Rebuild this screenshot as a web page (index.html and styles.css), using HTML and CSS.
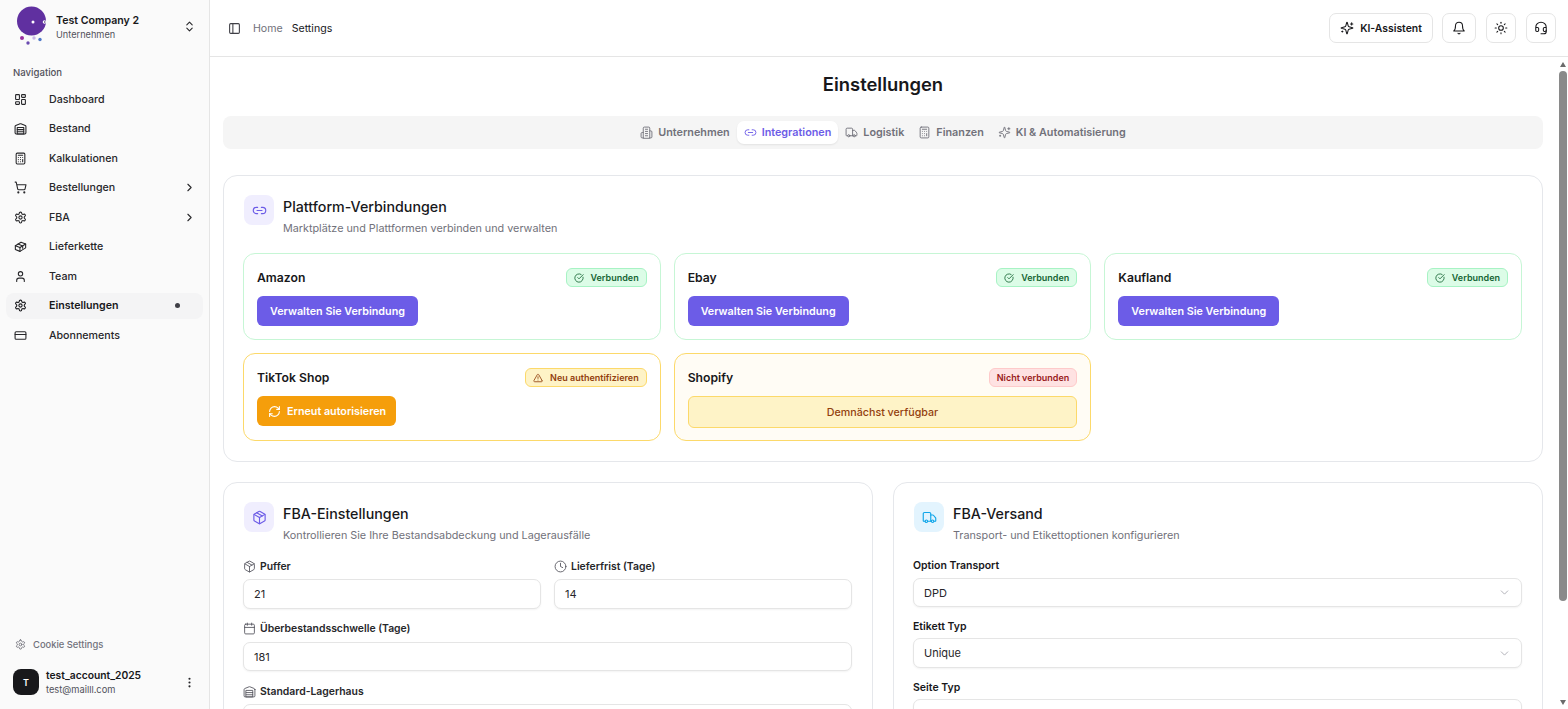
FILE: index.html
```html
<!DOCTYPE html>
<html lang="de">
<head>
  <meta charset="UTF-8">
  <meta name="viewport" content="width=device-width, initial-scale=1.0">
  <title>Einstellungen</title>
  <link rel="stylesheet" href="styles.css">
</head>
<body>
  <!-- Icon set -->
  <svg class="sprite" xmlns="http://www.w3.org/2000/svg">
    <symbol id="i-dashboard" viewBox="0 0 24 24"><rect x="3" y="3" width="7" height="9" rx="1"/><rect x="14" y="3" width="7" height="5" rx="1"/><rect x="14" y="12" width="7" height="9" rx="1"/><rect x="3" y="16" width="7" height="5" rx="1"/></symbol>
    <symbol id="i-warehouse" viewBox="0 0 24 24"><path d="M22 8.35V20a2 2 0 0 1-2 2H4a2 2 0 0 1-2-2V8.35A2 2 0 0 1 3.26 6.5l8-3.2a2 2 0 0 1 1.48 0l8 3.2A2 2 0 0 1 22 8.35Z"/><path d="M6 18h12"/><path d="M6 14h12"/><rect x="6" y="10" width="12" height="12"/></symbol>
    <symbol id="i-building" viewBox="0 0 24 24"><path d="M6 22V4a2 2 0 0 1 2-2h8a2 2 0 0 1 2 2v18Z"/><path d="M6 12H4a2 2 0 0 0-2 2v6a2 2 0 0 0 2 2h2"/><path d="M18 9h2a2 2 0 0 1 2 2v9a2 2 0 0 1-2 2h-2"/><path d="M10 6h4"/><path d="M10 10h4"/><path d="M10 14h4"/><path d="M10 18h4"/></symbol>
    <symbol id="i-calc" viewBox="0 0 24 24"><rect x="4" y="2" width="16" height="20" rx="2"/><line x1="8" x2="16" y1="6" y2="6"/><line x1="16" x2="16" y1="14" y2="18"/><path d="M16 10h.01"/><path d="M12 10h.01"/><path d="M8 10h.01"/><path d="M12 14h.01"/><path d="M8 14h.01"/><path d="M12 18h.01"/><path d="M8 18h.01"/></symbol>
    <symbol id="i-cart" viewBox="0 0 24 24"><circle cx="8" cy="21" r="1"/><circle cx="19" cy="21" r="1"/><path d="M2.05 2.05h2l2.66 12.42a2 2 0 0 0 2 1.58h9.78a2 2 0 0 0 1.95-1.57l1.65-7.43H5.12"/></symbol>
    <symbol id="i-cog" viewBox="0 0 24 24"><path d="M12.22 2h-.44a2 2 0 0 0-2 2v.18a2 2 0 0 1-1 1.73l-.43.25a2 2 0 0 1-2 0l-.15-.08a2 2 0 0 0-2.73.73l-.22.38a2 2 0 0 0 .73 2.73l.15.1a2 2 0 0 1 1 1.72v.51a2 2 0 0 1-1 1.74l-.15.09a2 2 0 0 0-.73 2.73l.22.38a2 2 0 0 0 2.73.73l.15-.08a2 2 0 0 1 2 0l.43.25a2 2 0 0 1 1 1.73V20a2 2 0 0 0 2 2h.44a2 2 0 0 0 2-2v-.18a2 2 0 0 1 1-1.73l.43-.25a2 2 0 0 1 2 0l.15.08a2 2 0 0 0 2.73-.73l.22-.39a2 2 0 0 0-.73-2.73l-.15-.08a2 2 0 0 1-1-1.74v-.5a2 2 0 0 1 1-1.74l.15-.09a2 2 0 0 0 .73-2.73l-.22-.38a2 2 0 0 0-2.73-.73l-.15.08a2 2 0 0 1-2 0l-.43-.25a2 2 0 0 1-1-1.73V4a2 2 0 0 0-2-2z"/><circle cx="12" cy="12" r="3"/></symbol>
    <symbol id="i-package" viewBox="0 0 24 24"><path d="m7.5 4.27 9 5.15"/><path d="M21 8a2 2 0 0 0-1-1.73l-7-4a2 2 0 0 0-2 0l-7 4A2 2 0 0 0 3 8v8a2 2 0 0 0 1 1.73l7 4a2 2 0 0 0 2 0l7-4A2 2 0 0 0 21 16Z"/><path d="m3.3 7 8.7 5 8.7-5"/><path d="M12 22V12"/></symbol>
    <symbol id="i-parcel" viewBox="0 0 24 24"><path d="M2.5 10.5 13 4l8.5 3.5v7L11 21l-8.5-3.5Z"/><path d="m2.5 10.5 8.5 3.5 10.5-6.5"/><path d="M11 14v7"/><path d="m7.5 7.5 8.5 3.5v4"/></symbol>
    <symbol id="i-user" viewBox="0 0 24 24"><path d="M19 21v-2a4 4 0 0 0-4-4H9a4 4 0 0 0-4 4v2"/><circle cx="12" cy="7" r="4"/></symbol>
    <symbol id="i-card" viewBox="0 0 24 24"><rect x="2" y="5" width="20" height="14" rx="2"/><line x1="2" x2="22" y1="10" y2="10"/></symbol>
    <symbol id="i-updown" viewBox="0 0 24 24"><path d="m7 15 5 5 5-5"/><path d="m7 9 5-5 5 5"/></symbol>
    <symbol id="i-right" viewBox="0 0 24 24"><path d="m9 18 6-6-6-6"/></symbol>
    <symbol id="i-down" viewBox="0 0 24 24"><path d="m6 9 6 6 6-6"/></symbol>
    <symbol id="i-more" viewBox="0 0 24 24"><circle cx="12" cy="12" r="1"/><circle cx="12" cy="5" r="1"/><circle cx="12" cy="19" r="1"/></symbol>
    <symbol id="i-panel" viewBox="0 0 24 24"><rect x="3" y="3" width="18" height="18" rx="2"/><path d="M9 3v18"/></symbol>
    <symbol id="i-sparkles" viewBox="0 0 24 24"><path d="M9.937 15.5A2 2 0 0 0 8.5 14.063l-6.135-1.582a.5.5 0 0 1 0-.962L8.5 9.936A2 2 0 0 0 9.937 8.5l1.582-6.135a.5.5 0 0 1 .963 0L14.063 8.5A2 2 0 0 0 15.5 9.937l6.135 1.581a.5.5 0 0 1 0 .964L15.5 14.063a2 2 0 0 0-1.437 1.437l-1.582 6.135a.5.5 0 0 1-.963 0z"/><path d="M20 3v4"/><path d="M22 5h-4"/><path d="M4 17v2"/><path d="M5 18H3"/></symbol>
    <symbol id="i-bell" viewBox="0 0 24 24"><path d="M6 8a6 6 0 0 1 12 0c0 7 3 9 3 9H3s3-2 3-9"/><path d="M10.3 21a1.94 1.94 0 0 0 3.4 0"/></symbol>
    <symbol id="i-sun" viewBox="0 0 24 24"><circle cx="12" cy="12" r="4"/><path d="M12 2v2"/><path d="M12 20v2"/><path d="m4.93 4.93 1.41 1.41"/><path d="m17.66 17.66 1.41 1.41"/><path d="M2 12h2"/><path d="M20 12h2"/><path d="m6.34 17.66-1.41 1.41"/><path d="m19.07 4.93-1.41 1.41"/></symbol>
    <symbol id="i-headset" viewBox="0 0 24 24"><path d="M3 11h3a2 2 0 0 1 2 2v3a2 2 0 0 1-2 2H5a2 2 0 0 1-2-2v-5Zm0 0a9 9 0 1 1 18 0m0 0v5a2 2 0 0 1-2 2h-1a2 2 0 0 1-2-2v-3a2 2 0 0 1 2-2h3Z"/><path d="M21 16v2a4 4 0 0 1-4 4h-5"/></symbol>
    <symbol id="i-link" viewBox="0 0 24 24"><path d="M9 17H7A5 5 0 0 1 7 7h2"/><path d="M15 7h2a5 5 0 1 1 0 10h-2"/><line x1="8" x2="16" y1="12" y2="12"/></symbol>
    <symbol id="i-truck" viewBox="0 0 24 24"><path d="M14 18V6a2 2 0 0 0-2-2H4a2 2 0 0 0-2 2v11a1 1 0 0 0 1 1h2"/><path d="M15 18H9"/><path d="M19 18h2a1 1 0 0 0 1-1v-3.65a1 1 0 0 0-.22-.624l-3.48-4.35A1 1 0 0 0 17.52 8H14"/><circle cx="17" cy="18" r="2"/><circle cx="7" cy="18" r="2"/></symbol>
    <symbol id="i-check" viewBox="0 0 24 24"><path d="M21.801 10A10 10 0 1 1 17 3.335"/><path d="m9 11 3 3L22 4"/></symbol>
    <symbol id="i-alert" viewBox="0 0 24 24"><path d="m21.73 18-8-14a2 2 0 0 0-3.48 0l-8 14A2 2 0 0 0 4 21h16a2 2 0 0 0 1.73-3"/><path d="M12 9v4"/><path d="M12 17h.01"/></symbol>
    <symbol id="i-refresh" viewBox="0 0 24 24"><path d="M3 12a9 9 0 0 1 9-9 9.75 9.75 0 0 1 6.74 2.74L21 8"/><path d="M21 3v5h-5"/><path d="M21 12a9 9 0 0 1-9 9 9.75 9.75 0 0 1-6.74-2.74L3 16"/><path d="M8 16H3v5"/></symbol>
    <symbol id="i-clock" viewBox="0 0 24 24"><circle cx="12" cy="12" r="10"/><polyline points="12 6 12 12 16 14"/></symbol>
    <symbol id="i-calendar" viewBox="0 0 24 24"><path d="M8 2v4"/><path d="M16 2v4"/><rect x="3" y="4" width="18" height="18" rx="2"/><path d="M3 10h18"/></symbol>
  </svg>

  <div class="app">
    <aside class="sidebar">
      <div class="company">
        <svg class="logo" viewBox="0 0 44 50">
          <circle cx="21.5" cy="21" r="14.5" fill="#6030a0"/>
          <circle cx="23" cy="22" r="1.5" fill="#fff"/>
          <circle cx="34.5" cy="22" r="1.8" fill="#fff"/>
          <circle cx="34.8" cy="22" r="0.7" fill="#2a1450"/>
          <circle cx="12" cy="38" r="2" fill="#9a2f9e"/>
          <circle cx="18" cy="43" r="1.7" fill="#6a4bb0"/>
          <circle cx="24" cy="38" r="1.7" fill="#c9b8e8"/>
          <circle cx="30" cy="39.5" r="1.7" fill="#4f78c8"/>
        </svg>
        <div class="company-text">
          <div class="company-name">Test Company 2</div>
          <div class="company-type">Unternehmen</div>
        </div>
        <svg class="icon updown"><use href="#i-updown"/></svg>
      </div>

      <div class="nav-title">Navigation</div>
      <nav class="nav">
        <a class="nav-item"><svg class="icon"><use href="#i-dashboard"/></svg><span>Dashboard</span></a>
        <a class="nav-item"><svg class="icon"><use href="#i-warehouse"/></svg><span>Bestand</span></a>
        <a class="nav-item"><svg class="icon"><use href="#i-calc"/></svg><span>Kalkulationen</span></a>
        <a class="nav-item"><svg class="icon"><use href="#i-cart"/></svg><span>Bestellungen</span><svg class="icon arrow"><use href="#i-right"/></svg></a>
        <a class="nav-item"><svg class="icon"><use href="#i-cog"/></svg><span>FBA</span><svg class="icon arrow"><use href="#i-right"/></svg></a>
        <a class="nav-item"><svg class="icon"><use href="#i-parcel"/></svg><span>Lieferkette</span></a>
        <a class="nav-item"><svg class="icon"><use href="#i-user"/></svg><span>Team</span></a>
        <a class="nav-item active"><svg class="icon"><use href="#i-cog"/></svg><span>Einstellungen</span><i class="dot"></i></a>
        <a class="nav-item"><svg class="icon"><use href="#i-card"/></svg><span>Abonnements</span></a>
      </nav>

      <div class="cookie"><svg class="icon"><use href="#i-cog"/></svg>Cookie Settings</div>
      <div class="account">
        <div class="avatar">T</div>
        <div class="account-text">
          <div class="account-name">test_account_2025</div>
          <div class="account-mail">test@mailll.com</div>
        </div>
        <svg class="icon more"><use href="#i-more"/></svg>
      </div>
    </aside>

    <div class="page">
      <header class="topbar">
        <svg class="icon panel"><use href="#i-panel"/></svg>
        <span class="crumb">Home</span>
        <span class="crumb current">Settings</span>
        <div class="top-actions">
          <button class="top-btn wide"><svg class="icon"><use href="#i-sparkles"/></svg>KI-Assistent</button>
          <button class="top-btn bell"><svg class="icon"><use href="#i-bell"/></svg></button>
          <button class="top-btn"><svg class="icon"><use href="#i-sun"/></svg></button>
          <button class="top-btn"><svg class="icon"><use href="#i-headset"/></svg></button>
        </div>
      </header>

      <div class="body-row">
        <main class="content">
          <h1>Einstellungen</h1>

          <div class="tabs">
            <div class="tab"><svg class="icon"><use href="#i-building"/></svg>Unternehmen</div>
            <div class="tab active"><svg class="icon"><use href="#i-link"/></svg>Integrationen</div>
            <div class="tab"><svg class="icon"><use href="#i-truck"/></svg>Logistik</div>
            <div class="tab"><svg class="icon"><use href="#i-calc"/></svg>Finanzen</div>
            <div class="tab"><svg class="icon"><use href="#i-sparkles"/></svg>KI &amp; Automatisierung</div>
          </div>

          <section class="card">
            <div class="card-head">
              <div class="head-icon violet"><svg class="icon"><use href="#i-link"/></svg></div>
              <div>
                <h2>Plattform-Verbindungen</h2>
                <p>Marktplätze und Plattformen verbinden und verwalten</p>
              </div>
            </div>

            <div class="platforms">
              <div class="platform ok">
                <div class="platform-top"><h3>Amazon</h3><span class="badge green"><svg class="icon"><use href="#i-check"/></svg>Verbunden</span></div>
                <button class="action">Verwalten Sie Verbindung</button>
              </div>
              <div class="platform ok">
                <div class="platform-top"><h3>Ebay</h3><span class="badge green"><svg class="icon"><use href="#i-check"/></svg>Verbunden</span></div>
                <button class="action">Verwalten Sie Verbindung</button>
              </div>
              <div class="platform ok">
                <div class="platform-top"><h3>Kaufland</h3><span class="badge green"><svg class="icon"><use href="#i-check"/></svg>Verbunden</span></div>
                <button class="action">Verwalten Sie Verbindung</button>
              </div>
              <div class="platform warn">
                <div class="platform-top"><h3>TikTok Shop</h3><span class="badge amber"><svg class="icon"><use href="#i-alert"/></svg>Neu authentifizieren</span></div>
                <button class="action orange"><svg class="icon"><use href="#i-refresh"/></svg>Erneut autorisieren</button>
              </div>
              <div class="platform warn soon">
                <div class="platform-top"><h3>Shopify</h3><span class="badge red">Nicht verbunden</span></div>
                <div class="soon-box">Demnächst verfügbar</div>
              </div>
            </div>
          </section>

          <div class="two-cols">
            <section class="card">
              <div class="card-head">
                <div class="head-icon violet"><svg class="icon"><use href="#i-package"/></svg></div>
                <div>
                  <h2>FBA-Einstellungen</h2>
                  <p>Kontrollieren Sie Ihre Bestandsabdeckung und Lagerausfälle</p>
                </div>
              </div>
              <div class="form-row">
                <div class="field">
                  <label><svg class="icon"><use href="#i-package"/></svg>Puffer</label>
                  <div class="input">21</div>
                </div>
                <div class="field">
                  <label><svg class="icon"><use href="#i-clock"/></svg>Lieferfrist (Tage)</label>
                  <div class="input">14</div>
                </div>
              </div>
              <div class="field threshold">
                <label><svg class="icon"><use href="#i-calendar"/></svg>Überbestandsschwelle (Tage)</label>
                <div class="input">181</div>
              </div>
              <div class="field">
                <label><svg class="icon"><use href="#i-warehouse"/></svg>Standard-Lagerhaus</label>
                <div class="input"></div>
              </div>
            </section>

            <section class="card">
              <div class="card-head">
                <div class="head-icon blue"><svg class="icon"><use href="#i-truck"/></svg></div>
                <div>
                  <h2>FBA-Versand</h2>
                  <p>Transport- und Etikettoptionen konfigurieren</p>
                </div>
              </div>
              <div class="field plain first">
                <label>Option Transport</label>
                <div class="input select">DPD<svg class="icon"><use href="#i-down"/></svg></div>
              </div>
              <div class="field plain">
                <label>Etikett Typ</label>
                <div class="input select">Unique<svg class="icon"><use href="#i-down"/></svg></div>
              </div>
              <div class="field plain">
                <label>Seite Typ</label>
                <div class="input select"></div>
              </div>
            </section>
          </div>
        </main>

        <div class="scrollbar">
          <i class="arrow-up"></i>
          <div class="thumb"></div>
          <i class="arrow-down"></i>
        </div>
      </div>
    </div>
  </div>
</body>
</html>
```

FILE: styles.css
```css
* {
  box-sizing: border-box;
}

html, body {
  height: 100%;
}

body {
  margin: 0;
  font-family: Inter, "Noto Sans", sans-serif;
  color: #18181b;
  background: #fff;
  overflow: hidden;
}

.sprite {
  display: none;
}

.icon {
  width: 16px;
  height: 16px;
  flex: none;
  fill: none;
  stroke: currentColor;
  stroke-width: 2;
  stroke-linecap: round;
  stroke-linejoin: round;
}

.app {
  display: flex;
  height: 709px;
}

/* Sidebar */
.sidebar {
  width: 210px;
  flex: none;
  display: flex;
  flex-direction: column;
  background: #fafafa;
  border-right: 1px solid #e5e5e5;
}

.company {
  display: flex;
  align-items: center;
  height: 56px;
  padding: 0 12px 0 10px;
}

.logo {
  width: 44px;
  height: 50px;
  flex: none;
  margin-top: -6px;
}

.company-text {
  flex: 1;
  margin-left: 2px;
  margin-top: -1px;
}

.company-name {
  font-size: 10.6px;
  font-weight: 600;
  line-height: 14px;
}

.company-type {
  font-size: 9.2px;
  line-height: 13px;
  color: #52525b;
}

.updown {
  width: 13px;
  height: 13px;
  color: #27272a;
  margin-right: 1px;
  margin-top: -4px;
}

.nav-title {
  margin-top: 10px;
  padding-left: 13px;
  font-size: 9.6px;
  font-weight: 500;
  line-height: 14px;
  color: #52525b;
}

.nav {
  margin-top: 6px;
  padding: 0 6px;
}

.nav-item {
  display: flex;
  align-items: center;
  height: 26px;
  margin-bottom: 3.5px;
  padding: 0 8px;
  border-radius: 8px;
  font-size: 10.65px;
  font-weight: 500;
  color: #27272a;
}

.nav-item .icon {
  width: 13px;
  height: 13px;
  margin-right: 22px;
  stroke-width: 2;
}

.nav-item span {
  flex: 1;
}

.nav-item .arrow {
  margin: 0 -1px 0 0;
}

.nav-item.active {
  background: #f4f4f5;
  font-weight: 600;
  color: #18181b;
}

.dot {
  width: 5px;
  height: 5px;
  margin-right: 15px;
  border-radius: 50%;
  background: #3f3f46;
}

.cookie {
  display: flex;
  align-items: center;
  gap: 7px;
  margin-top: auto;
  padding-left: 15px;
  font-size: 9.4px;
  font-weight: 500;
  color: #71717a;
}

.cookie .icon {
  width: 11px;
  height: 11px;
}

.account {
  display: flex;
  align-items: center;
  height: 50px;
  margin-top: 7px;
  margin-bottom: 2px;
  padding: 0 13px;
}

.avatar {
  width: 26px;
  height: 26px;
  flex: none;
  display: flex;
  align-items: center;
  justify-content: center;
  border-radius: 8px;
  background: #18181b;
  color: #fff;
  font-size: 9px;
  font-weight: 600;
}

.account-text {
  flex: 1;
  margin-left: 7px;
}

.account-name {
  font-size: 10.3px;
  font-weight: 600;
  line-height: 15px;
}

.account-mail {
  font-size: 9.3px;
  line-height: 14px;
  color: #52525b;
}

.more {
  width: 13px;
  height: 13px;
  color: #27272a;
}

/* Top bar */
.page {
  flex: 1;
  min-width: 0;
  display: flex;
  flex-direction: column;
}

.topbar {
  display: flex;
  align-items: center;
  flex: none;
  height: 57px;
  padding: 0 18px;
  border-bottom: 1px solid #e5e5e5;
}

.panel {
  width: 13px;
  height: 13px;
  margin-right: 12px;
  color: #3f3f46;
}

.crumb {
  margin-right: 9px;
  font-size: 10.6px;
  color: #71717a;
}

.crumb.current {
  color: #18181b;
}

.top-actions {
  display: flex;
  gap: 10px;
  margin-left: auto;
  margin-right: -6px;
  margin-top: -1px;
}

.top-btn {
  display: flex;
  align-items: center;
  justify-content: center;
  width: 30px;
  height: 30px;
  padding: 1px 0 0;
  border: 1px solid #e5e5e5;
  border-radius: 7px;
  background: #fff;
  color: #18181b;
  font-family: inherit;
  font-size: 10.4px;
  font-weight: 600;
}

.top-btn.wide {
  width: 104px;
  gap: 6px;
  margin-right: -1px;
}

.top-btn.bell {
  width: 34px;
}

.top-btn .icon {
  width: 14px;
  height: 14px;
  stroke-width: 1.8;
}

/* Main area */
.body-row {
  flex: 1;
  min-height: 0;
  display: flex;
}

.content {
  flex: 1;
  min-width: 0;
  padding: 0 14px 14px 13px;
  overflow: hidden;
}

.scrollbar {
  width: 11px;
  flex: none;
  display: flex;
  flex-direction: column;
  align-items: center;
  padding: 5px 0 4px;
}

.arrow-up,
.arrow-down {
  width: 0;
  height: 0;
  border-left: 3.5px solid transparent;
  border-right: 3.5px solid transparent;
}

.arrow-up {
  border-bottom: 5px solid #6b6b6b;
}

.arrow-down {
  margin-top: auto;
  border-top: 5px solid #6b6b6b;
}

.thumb {
  width: 8px;
  height: 530px;
  margin-top: 4px;
  border-radius: 4px;
  background: #8a8a8a;
}

h1 {
  margin: 0;
  padding-top: 15px;
  height: 59px;
  font-size: 18.4px;
  font-weight: 600;
  line-height: 24px;
  text-align: center;
}

.tabs {
  display: flex;
  align-items: center;
  justify-content: center;
  height: 33px;
  border-radius: 8px;
  background: #f5f5f5;
}

.tab {
  display: flex;
  align-items: center;
  gap: 5px;
  height: 23px;
  padding: 0 7px;
  border-radius: 7px;
  font-size: 10.8px;
  font-weight: 600;
  color: #71717a;
}

.tab .icon {
  width: 13px;
  height: 13px;
  stroke-width: 1.7;
}

.tab.active {
  background: #fff;
  color: #6c5ce7;
  box-shadow: 0 1px 2px rgba(0, 0, 0, 0.08);
}

.card {
  margin-top: 26px;
  padding: 19px 20px 20px 19px;
  border: 1px solid #e5e7eb;
  border-radius: 14px;
  background: #fff;
}

.card-head {
  display: flex;
  gap: 9px;
}

.head-icon {
  width: 30px;
  height: 30px;
  flex: none;
  display: flex;
  align-items: center;
  justify-content: center;
  margin-left: 1px;
  border-radius: 8px;
}

.head-icon .icon {
  width: 15px;
  height: 15px;
  stroke-width: 1.8;
}

.head-icon.violet {
  background: #f0eefe;
  color: #6c5ce7;
}

.head-icon.blue {
  background: #e3f4fe;
  color: #0ea5e9;
}

h2 {
  margin: 1px 0 0;
  font-size: 14.25px;
  font-weight: 500;
  line-height: 21px;
}

.card-head p {
  margin: 4px 0 0;
  font-size: 10.8px;
  line-height: 16px;
  color: #71717a;
}

/* Platform grid */
.platforms {
  display: grid;
  grid-template-columns: repeat(3, 1fr);
  gap: 13px;
  margin-top: 16px;
}

.platform {
  height: 87px;
  padding: 14px 13px;
  border: 1px solid #c6f6d5;
  border-radius: 12px;
}

.platform.warn {
  height: 88px;
  border-color: #fcd96a;
}

.platform.soon {
  background: #fffcf5;
}

.platform-top {
  display: flex;
  align-items: center;
  justify-content: space-between;
  height: 19px;
  margin-bottom: 9px;
}

h3 {
  margin: 0;
  font-size: 12.2px;
  font-weight: 600;
  line-height: 18px;
}

.badge {
  display: flex;
  align-items: center;
  gap: 7px;
  height: 19px;
  padding: 0 7px;
  border: 1px solid;
  border-radius: 6px;
  font-size: 9px;
  font-weight: 600;
}

.badge .icon {
  width: 10px;
  height: 10px;
}

.badge.green {
  background: #dcfce7;
  border-color: #a7f3c4;
  color: #166534;
}

.badge.amber {
  background: #fef3c7;
  border-color: #fcd96a;
  color: #92400e;
}

.badge.red {
  background: #fee2e2;
  border-color: #fecaca;
  color: #991b1b;
}

.action {
  display: inline-flex;
  align-items: center;
  gap: 6px;
  height: 30px;
  padding: 0 13px;
  border: 0;
  border-radius: 6px;
  background: #6c5ce7;
  color: #fff;
  font-family: inherit;
  font-size: 10.75px;
  font-weight: 600;
}

.action.orange {
  background: #f59e0b;
  padding: 0 10px 0 11px;
}

.action .icon {
  width: 13px;
  height: 13px;
}

.soon-box {
  height: 32px;
  display: flex;
  align-items: center;
  justify-content: center;
  border: 1px solid #fcd96a;
  border-radius: 6px;
  background: #fef3c7;
  color: #92400e;
  font-size: 10.7px;
  font-weight: 500;
}

/* Forms */
.two-cols {
  display: grid;
  grid-template-columns: 1fr 1fr;
  gap: 20px;
}

.two-cols .card {
  margin-top: 20px;
  padding-bottom: 30px;
}

.form-row {
  display: grid;
  grid-template-columns: 1fr 1fr;
  gap: 13px;
}

.field {
  margin-top: 12px;
}

.form-row .field {
  margin-top: 14px;
}

.field label {
  display: flex;
  align-items: center;
  gap: 4px;
  height: 16px;
  margin-bottom: 5px;
  font-size: 10.4px;
  font-weight: 600;
  color: #27272a;
}

.field label .icon {
  width: 13px;
  height: 13px;
  stroke-width: 1.6;
  color: #52525b;
}

.field.threshold {
  margin-top: 11px;
}

.field.threshold label {
  margin-bottom: 6px;
}

.field.threshold .input {
  height: 29px;
}

.input {
  display: flex;
  align-items: center;
  height: 30px;
  padding: 0 10px;
  border: 1px solid #e5e5e5;
  border-radius: 7px;
  background: #fff;
  box-shadow: 0 1px 2px rgba(0, 0, 0, 0.05);
  font-size: 11px;
  color: #27272a;
}

.select {
  justify-content: space-between;
}

.select .icon {
  width: 13px;
  height: 13px;
  stroke-width: 1.5;
  color: #a1a1aa;
}

.field.plain {
  margin-top: 11px;
}

.field.plain label {
  height: 16px;
  margin-bottom: 4px;
  font-size: 10.5px;
  color: #18181b;
}

.field.plain.first {
  margin-top: 13px;
}

.field.plain.first label {
  margin-bottom: 5px;
}

.field.plain.first .input {
  height: 29px;
}
```
